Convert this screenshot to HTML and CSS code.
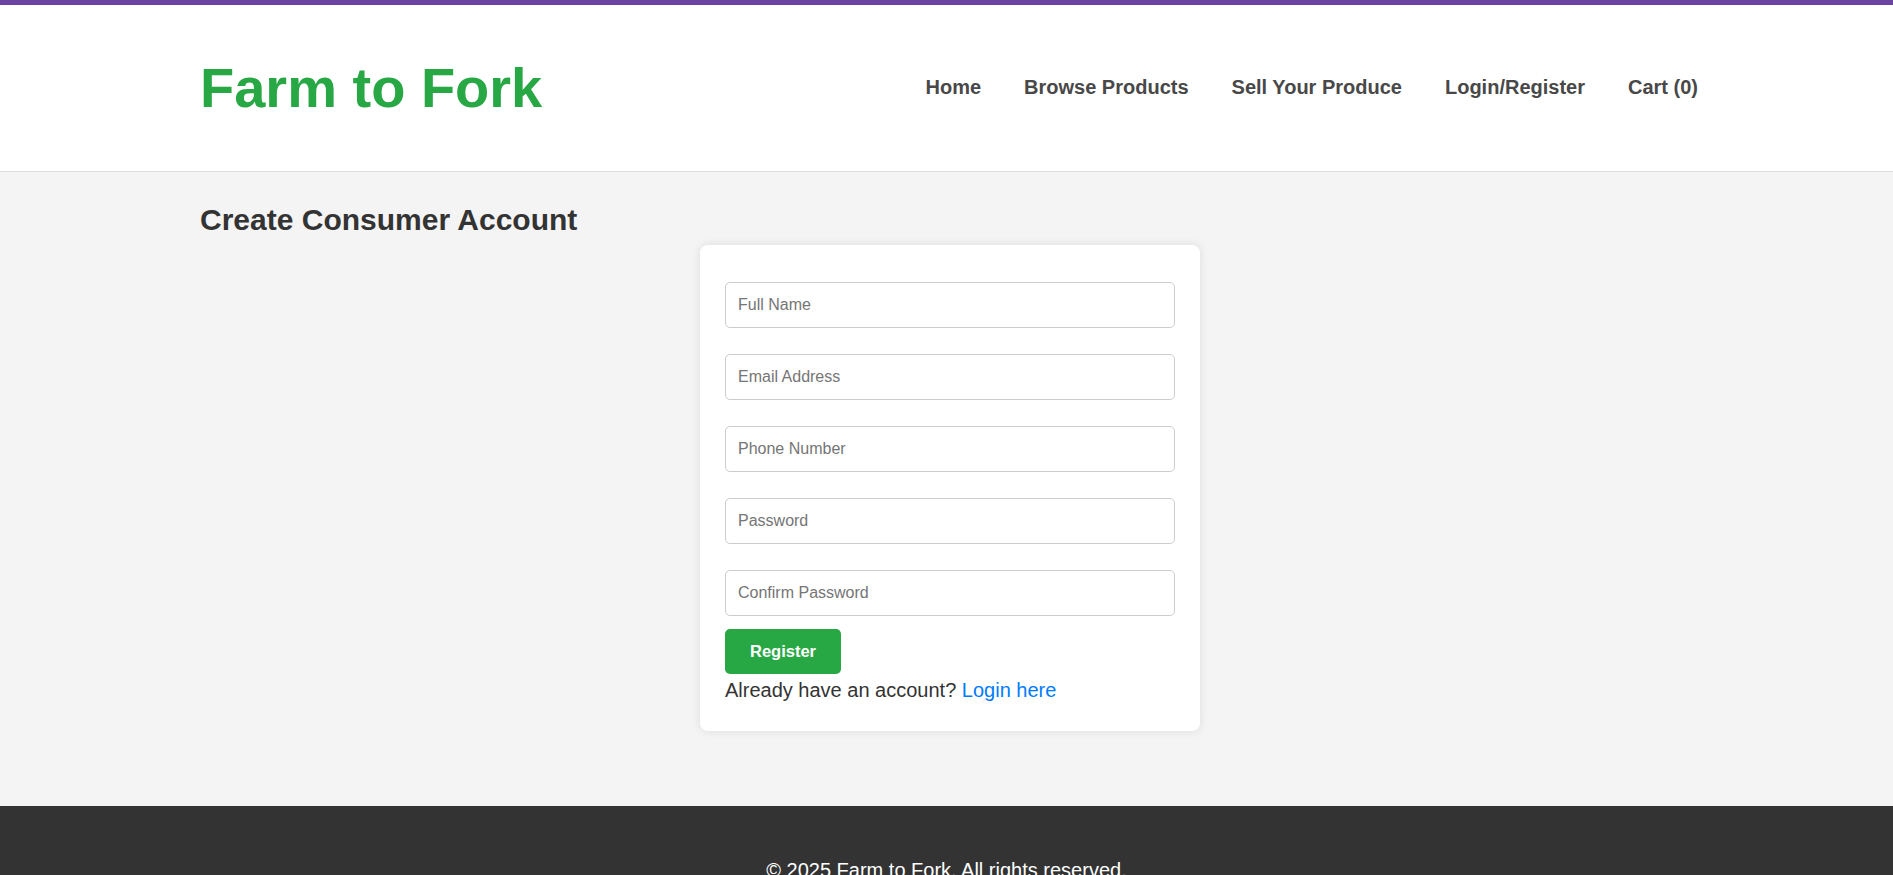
FILE: index.html
```html
<!DOCTYPE html>
<html lang="en">
<head>
<meta charset="utf-8">
<title>Farm to Fork - Create Consumer Account</title>
<link rel="stylesheet" href="styles.css">
</head>
<body>
<header class="site-header">
  <div class="container header-inner">
    <h1 class="logo">Farm to Fork</h1>
    <nav class="nav">
      <a href="#">Home</a>
      <a href="#">Browse Products</a>
      <a href="#">Sell Your Produce</a>
      <a href="#">Login/Register</a>
      <a href="#">Cart (0)</a>
    </nav>
  </div>
</header>
<main class="main">
  <div class="container">
    <h2 class="page-title">Create Consumer Account</h2>
    <form class="card">
      <input class="field" type="text" placeholder="Full Name">
      <input class="field" type="email" placeholder="Email Address">
      <input class="field" type="tel" placeholder="Phone Number">
      <input class="field" type="password" placeholder="Password">
      <input class="field field-last" type="password" placeholder="Confirm Password">
      <div class="actions"><button class="btn" type="button">Register</button></div>
      <p class="login-note">Already have an account? <a href="#">Login here</a></p>
    </form>
  </div>
</main>
<footer class="site-footer">
  <p>© 2025 Farm to Fork. All rights reserved.</p>
</footer>
</body>
</html>
```
FILE: styles.css
```css
html, body {
  margin: 0;
  padding: 0;
}
body {
  font-family: Arial, "Liberation Sans", sans-serif;
  font-size: 20px;
  line-height: 1.6;
  color: #333;
  background: #f4f4f4;
}
.container {
  width: 1500px;
  margin-left: calc(50% - 746.5px);
}
.site-header {
  background: #fff;
  border-top: 5px solid #6c43a1;
  border-bottom: 1px solid #ddd;
  padding: 38px 0;
}
.header-inner {
  display: flex;
  align-items: center;
  justify-content: space-between;
}
.logo {
  margin: 0;
  font-size: 56px;
  line-height: 1.6;
  font-weight: bold;
  color: #28a745;
}
.nav {
  display: flex;
  gap: 43px;
  padding-right: 2px;
  padding-bottom: 2px;
}
.nav a {
  color: #484848;
  text-decoration: none;
  font-weight: bold;
  font-size: 20px;
}
.main {
  padding: 24px 0 75px;
}
.page-title {
  margin: 0;
  font-size: 30px;
  line-height: 1.6;
  font-weight: bold;
  color: #333;
}
.card {
  display: flex;
  flex-direction: column;
  align-items: stretch;
  width: 500px;
  box-sizing: border-box;
  margin: 1px auto 0;
  padding: 37px 25px 25px;
  background: #fff;
  border-radius: 8px;
  box-shadow: 0 0 10px rgba(0, 0, 0, 0.1);
}
.field {
  display: block;
  box-sizing: border-box;
  width: 100%;
  height: 46px;
  margin: 0 0 26px;
  padding: 12px 12px;
  font-family: Arial, "Liberation Sans", sans-serif;
  font-size: 16px;
  line-height: 20px;
  color: #333;
  background: #fff;
  border: 1px solid #ccc;
  border-radius: 5px;
}
.field::placeholder {
  color: #757575;
}
.field-last {
  margin-bottom: 13px;
}
.actions {
  display: flex;
}
.btn {
  height: 45px;
  padding: 0 25px;
  font-family: Arial, "Liberation Sans", sans-serif;
  font-size: 16.5px;
  font-weight: bold;
  color: #fff;
  background: #28a745;
  border: none;
  border-radius: 5px;
  cursor: pointer;
}
.login-note {
  margin: 0;
  font-size: 20px;
  line-height: 32px;
  color: #333;
}
.login-note a {
  color: #007bff;
  text-decoration: none;
}
.site-footer {
  background: #333;
  color: #fff;
  text-align: center;
  padding: 28px 0 20px;
}
.site-footer p {
  margin: 20px 0;
}
```
